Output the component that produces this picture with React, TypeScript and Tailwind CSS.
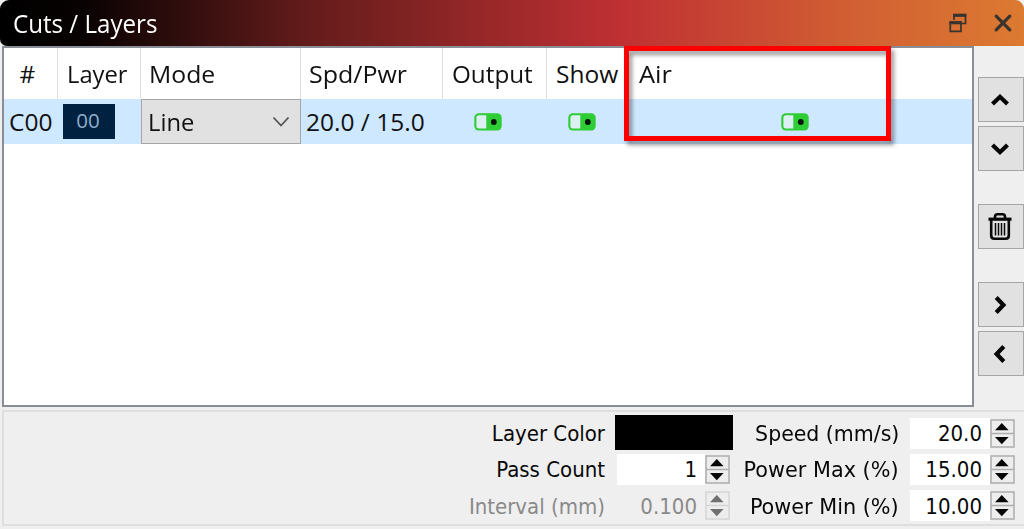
import React from "react";

const ui = "font-['Open_Sans','Noto_Sans',sans-serif] whitespace-nowrap inline-block origin-left";
const form = "font-['DejaVu_Sans_Condensed','DejaVu_Sans',sans-serif] whitespace-nowrap inline-block origin-right [font-stretch:condensed]";

function Toggle() {
  return (
    <svg width="28" height="18" viewBox="0 0 28 18" className="block">
      <rect x="0.3" y="0.3" width="27.4" height="17.2" rx="4.5" fill="#2ecc35" />
      <path d="M5 2.3H12.3V15.5H5Q2.4 15.5 2.4 13V5Q2.4 2.3 5 2.3Z" fill="#dceff3" />
      <circle cx="19.8" cy="9" r="2.9" fill="#06150a" />
    </svg>
  );
}

function Chevron({ d }: { d: string }) {
  return (
    <svg width="24" height="24" viewBox="0 0 24 24" fill="none" stroke="#050505" strokeWidth="4.2" className="shrink-0">
      <path d={d} />
    </svg>
  );
}

function SideButton({ children, className = "" }: { children: React.ReactNode; className?: string }) {
  return (
    <button className={`flex h-[45px] w-[46px] shrink-0 items-center justify-center border border-[#a6a6a6] bg-[#e1e1e1] pr-[2px] ${className}`}>
      {children}
    </button>
  );
}

function Spinner({ disabled = false }: { disabled?: boolean }) {
  const fill = disabled ? "#707070" : "#050505";
  const line = disabled ? "#d5d5d5" : "#adadad";
  return (
    <svg width="25" height="29" viewBox="0 0 25 29" className="block shrink-0">
      <rect x="1" y="1" width="23" height="27" fill="#ededed" stroke={line} strokeWidth="1.5" />
      <path d="M1 14.5H24" stroke={line} strokeWidth="1.5" />
      <path d="M5 11.3L11.8 4L18.6 11.3Z M5 18L11.8 25.3L18.6 18Z" fill={fill} />
    </svg>
  );
}

function Field({ value, width, disabled = false }: { value: string; width: string; disabled?: boolean }) {
  return (
    <div className="flex items-center">
      <div className={`flex h-[31px] items-center justify-end pr-[8px] pt-[2px] ${width} ${disabled ? "text-[#8a8a8a]" : "bg-white"}`}>
        <span className={form}>{value}</span>
      </div>
      <Spinner disabled={disabled} />
    </div>
  );
}

export default function App() {
  return (
    <div className="flex h-[529px] w-[1024px] flex-col overflow-hidden bg-[#efefef] text-[#111]">
      <header className="flex h-[46px] shrink-0 items-center rounded-t-[9px] rounded-bl-[7px] bg-[linear-gradient(90deg,#000_0px,#080202_80px,#641c1b_310px,#bf3033_620px,#d15f33_850px,#dc7a31_1024px)] pl-[13px] text-white">
        <span className={`${ui} scale-x-[0.965] text-[25px] leading-[34px]`}>Cuts / Layers</span>
        <svg width="20" height="22" viewBox="0 0 20 22" fill="none" stroke="#39332f" strokeWidth="1.7" className="mb-[1px] ml-auto mr-[25px]">
          <path d="M6 8V2.5H17.5V11.5H13.5" />
          <path d="M5.2 3.4H18.3" strokeWidth="3" />
          <path d="M2.3 10H13V19.3H2.3Z" />
          <path d="M1.5 10.8H13.8" strokeWidth="3" />
        </svg>
        <svg width="20" height="20" viewBox="0 0 20 20" fill="none" stroke="#39332f" strokeWidth="3.2" strokeLinecap="round" className="mr-[11px]">
          <path d="M3.2 3.2L16.8 16.8M16.8 3.2L3.2 16.8" />
        </svg>
      </header>

      <main className="flex h-[361px] shrink-0">
        <section className="relative ml-[2px] h-[361px] w-[972px] border-2 border-[#898d96] bg-white text-[24.5px] leading-[34px]">
          <div className="grid h-[51px] grid-cols-[54px_83px_160px_142px_104px_77px_1fr] items-stretch">
            <div className="flex items-center justify-center border-r border-[#dfdfdf] pr-[6px]"><span className={ui}>#</span></div>
            <div className="flex items-center border-r border-[#dfdfdf] pl-[9px]"><span className={`${ui} scale-x-[0.97]`}>Layer</span></div>
            <div className="flex items-center border-r border-[#dfdfdf] pl-[8px]"><span className={`${ui} scale-x-[1.01]`}>Mode</span></div>
            <div className="flex items-center border-r border-[#dfdfdf] pl-[8px]"><span className={`${ui} scale-x-[1.02]`}>Spd/Pwr</span></div>
            <div className="flex items-center border-r border-[#dfdfdf] pl-[9px]"><span className={`${ui} scale-x-[0.99]`}>Output</span></div>
            <div className="flex items-center pl-[9px]"><span className={ui}>Show</span></div>
            <div className="flex items-center pl-[15px]"><span className={`${ui} scale-x-[1.04]`}>Air</span></div>
          </div>
          <div className="grid h-[45px] grid-cols-[54px_83px_160px_142px_104px_77px_1fr] items-stretch bg-[#cde8ff]">
            <div className="flex items-center pl-[5px] pt-[1px]"><span className={ui}>C00</span></div>
            <div className="flex items-center pb-[1px] pl-[5px]">
              <div className="flex h-[35px] w-[52px] items-center justify-center bg-[#00213f] pb-[2px] pr-[2px] text-[20.5px] text-[#8faecb]"><span className={ui}>00</span></div>
            </div>
            <div className="flex items-center justify-between border border-[#a6a6a6] bg-[#e1e1e1] pl-[6px] pr-[10px] pt-[1px]">
              <span className={`${ui} scale-x-[0.97]`}>Line</span>
              <svg width="18" height="12" viewBox="0 0 18 12" fill="none" stroke="#555" strokeWidth="1.8"><path d="M1.5 1.5L9 9.5L16.5 1.5" /></svg>
            </div>
            <div className="flex items-center pl-[5px] pt-[1px]"><span className={ui}>20.0 / 15.0</span></div>
            <div className="flex items-center pl-[31px]"><Toggle /></div>
            <div className="flex items-center pl-[21px]"><Toggle /></div>
            <div className="flex items-center pl-[157px]"><Toggle /></div>
          </div>
          <div className="absolute left-[620px] top-[-2px] h-[95px] w-[267px] border-[5px] border-[#ff0000] [filter:drop-shadow(3px_4px_2px_rgba(0,0,0,0.4))]" />
        </section>
        <aside className="ml-[4px] flex flex-col pt-[31px]">
          <SideButton><Chevron d="M4.5 16L12 8.8L19.5 16" /></SideButton>
          <SideButton className="mt-[4px]"><Chevron d="M4.5 8L12 15.2L19.5 8" /></SideButton>
          <SideButton className="mt-[33px]">
            <svg width="26" height="30" viewBox="0 0 26 30" fill="none" stroke="#080808">
              <path d="M1.5 7.2H24.5" strokeWidth="3.2" />
              <path d="M8 7V4.8Q8 2.3 10.5 2.3H15.5Q18 2.3 18 4.8V7" strokeWidth="2.6" />
              <path d="M4.2 8V23.5Q4.2 26.8 7.5 26.8H18.5Q21.8 26.8 21.8 23.5V8" strokeWidth="2.6" />
              <path d="M8.5 11V23.5M11.5 11V23.5M14.5 11V23.5M17.5 11V23.5" strokeWidth="1.5" />
            </svg>
          </SideButton>
          <SideButton className="mt-[33px]"><Chevron d="M8.2 4.5L15.4 12L8.2 19.5" /></SideButton>
          <SideButton className="mt-[4px]"><Chevron d="M15.8 4.5L8.6 12L15.8 19.5" /></SideButton>
        </aside>
      </main>

      <section className="ml-[2px] mt-[3px] flex h-[116px] w-[1030px] shrink-0 border-2 border-[#dedede] pt-[3px] text-[22px] leading-[30px] text-[#080808]">
        <div className="ml-auto grid grid-cols-[160px_119px] grid-rows-[36px_36.5px_36.5px] items-center gap-x-[10px]">
          <span className={`${form} justify-self-end pt-[2px]`}>Layer Color</span>
          <div className="mb-[1px] h-[35px] w-[118px] bg-black" />
          <span className={`${form} justify-self-end pt-[2px]`}>Pass Count</span>
          <div className="pl-[2px]"><Field value="1" width="w-[88px]" /></div>
          <span className={`${form} justify-self-end pt-[2px] text-[#8a8a8a]`}>Interval (mm)</span>
          <div className="pl-[2px]"><Field value="0.100" width="w-[88px]" disabled /></div>
        </div>
        <div className="mr-[15px] grid grid-cols-[165px_105px] grid-rows-[36px_36.5px_36.5px] items-center gap-x-[11px]">
          <span className={`${form} scale-x-[1.035] justify-self-end pt-[2px]`}>Speed (mm/s)</span>
          <Field value="20.0" width="w-[80px]" />
          <span className={`${form} scale-x-[1.05] justify-self-end pt-[2px]`}>Power Max (%)</span>
          <Field value="15.00" width="w-[80px]" />
          <span className={`${form} scale-x-[1.05] justify-self-end pt-[2px]`}>Power Min (%)</span>
          <Field value="10.00" width="w-[80px]" />
        </div>
      </section>
    </div>
  );
}
